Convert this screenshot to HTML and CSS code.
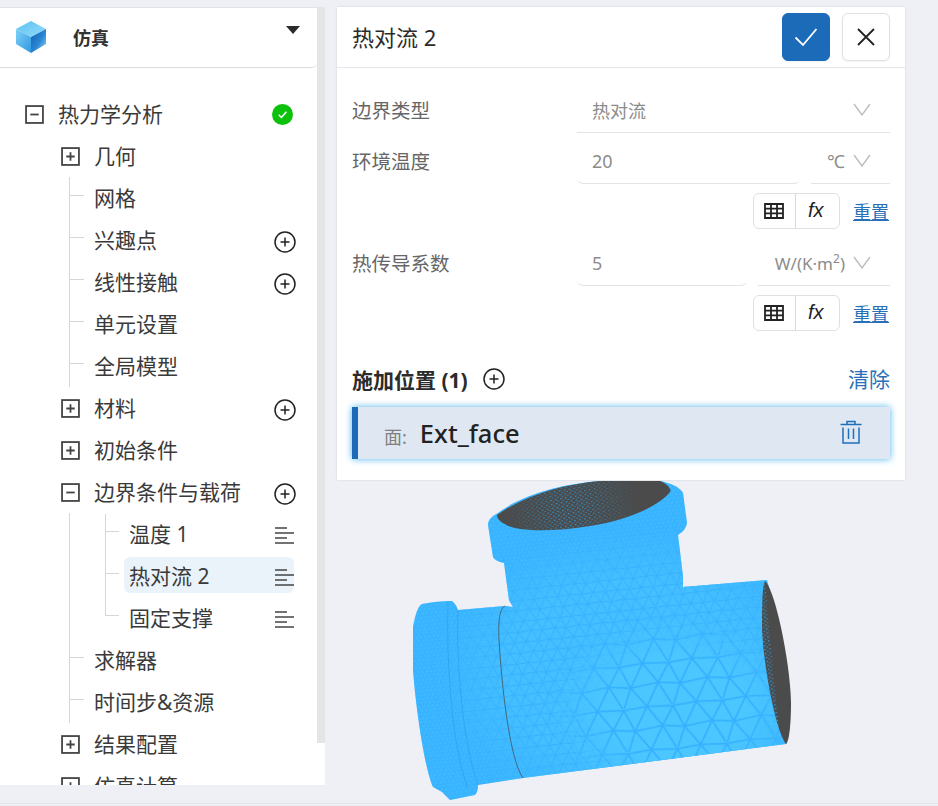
FILE: index.html
```html
<!DOCTYPE html>
<html lang="zh-CN">
<head>
<meta charset="utf-8">
<title>热对流 2</title>
<link rel="stylesheet" href="styles.css">
</head>
<body>
<div class="app">
  <svg class="model" viewBox="0 0 938 806" width="938" height="806" aria-hidden="true">
    <defs>
      <path id="tile" d="M0 0L42 3L80 0M-23 38L22 33L57 38L102 33M0 0L22 33L42 3L57 38L80 0L102 33M0 0L-23 38M-23 38L0 70L22 33L42 73L57 38L80 70L102 33M0 70L42 73L80 70"/>
      <pattern id="fine" width="80" height="70" patternUnits="userSpaceOnUse" patternTransform="rotate(-6) scale(.11)">
        <use href="#tile" fill="none" stroke="#4cc2ff" stroke-width="4"/>
      </pattern>
      <pattern id="medium" width="80" height="70" patternUnits="userSpaceOnUse" patternTransform="rotate(-6) scale(.3)">
        <rect width="80" height="70" fill="#45bfff"/>
        <use href="#tile" fill="none" stroke="#33b0ff" stroke-width="3.200"/>
      </pattern>
      <pattern id="coarse" width="80" height="70" patternUnits="userSpaceOnUse" patternTransform="rotate(-6) translate(520 640) scale(.62)">
        <rect width="80" height="70" fill="#4cc6ff"/>
        <use href="#tile" fill="none" stroke="#33b0ff" stroke-width="2.600"/>
      </pattern>
      <pattern id="dots" width="5" height="4" patternUnits="userSpaceOnUse" patternTransform="rotate(-10)">
        <rect x="0" y="0" width="1.500" height="1.200" fill="#2aa0e6"/>
        <rect x="2.500" y="2" width="1.200" height="1" fill="#2aa0e6"/>
      </pattern>
      <radialGradient id="fadeMedium" gradientUnits="userSpaceOnUse" cx="630" cy="670" r="200" gradientTransform="translate(0 170) scale(1 .75)">
        <stop offset=".6" stop-color="#fff"/>
        <stop offset="1" stop-color="#000"/>
      </radialGradient>
      <radialGradient id="fadeCoarse" gradientUnits="userSpaceOnUse" cx="675" cy="708" r="130" gradientTransform="translate(0 195) scale(1 .725)">
        <stop offset=".55" stop-color="#fff"/>
        <stop offset="1" stop-color="#000"/>
      </radialGradient>
      <radialGradient id="fadeDots" gradientUnits="userSpaceOnUse" cx="570" cy="510" r="70">
        <stop offset=".2" stop-color="#fff"/>
        <stop offset="1" stop-color="#000"/>
      </radialGradient>
      <mask id="maskMedium" maskUnits="userSpaceOnUse" x="325" y="470" width="613" height="336"><rect x="325" y="470" width="613" height="336" fill="url(#fadeMedium)"/></mask>
      <mask id="maskCoarse" maskUnits="userSpaceOnUse" x="325" y="470" width="613" height="336"><rect x="325" y="470" width="613" height="336" fill="url(#fadeCoarse)"/></mask>
      <mask id="maskDots" maskUnits="userSpaceOnUse" x="325" y="470" width="613" height="336"><rect x="325" y="470" width="613" height="336" fill="url(#fadeDots)"/></mask>
      <path id="body" d="M413 627C415 615 418 606 422 604C432 602 442 601 452 601Q456 604 458 610L505 606L513 607L509 600L504 563Q495 561 493 557L488 525Q488 518 498 513C520 496 560 484 600 481L660 481C670 483 680 487 683 493L687 523Q686 530 678 535L683 577L683 587L767 580C778 620 790 680 786 744L523 778L478 785Q478 792 475 795L450 800L442 792L433 787C425 770 416 710 413 670Z"/>
    </defs>
    <use href="#body" fill="#33b0ff"/>
    <use href="#body" fill="url(#fine)"/>
    <use href="#body" fill="url(#medium)" mask="url(#maskMedium)"/>
    <use href="#body" fill="url(#coarse)" mask="url(#maskCoarse)"/>
    <path d="M458 610C456 660 462 740 478 785M448 601C446 660 452 750 468 788" fill="none" stroke="#2fa8f2" stroke-width="1"/>
    <path d="M497 515C525 495 565 484 600 481L660 481C668 484 672 490 670 492C660 505 630 520 590 526C555 532 515 532 505 524C500 522 497 518 497 515Z" fill="#4b4b4b"/>
    <path d="M497 515C525 495 565 484 600 481L660 481C668 484 672 490 670 492C660 505 630 520 590 526C555 532 515 532 505 524C500 522 497 518 497 515Z" fill="url(#dots)" mask="url(#maskDots)"/>
    <path d="M765 581C775 590 790 660 791 703C791 725 789 742 786 744C778 735 765 680 762 630C762 605 762 588 765 581Z" fill="#4b4b4b"/>
    <path d="M765 581C762 588 762 605 762 630C765 680 772 712 779 730L770 640Z" fill="url(#dots)"/>
    <path d="M505 606C500 608 498 620 499 640C502 690 510 760 523 778" fill="none" stroke="#46535e" stroke-width=".8"/>
  </svg>

  <aside class="sidebar">
    <div class="brand">
      <svg class="brand-logo" viewBox="0 0 30 32" width="30" height="32" aria-hidden="true">
        <defs>
          <linearGradient id="cubeTop" x1="0" y1="0" x2="1" y2="1"><stop offset="0" stop-color="#5cc0f2"/><stop offset="1" stop-color="#93dcfa"/></linearGradient>
          <linearGradient id="cubeLeft" x1="0" y1="0" x2="1" y2="1"><stop offset="0" stop-color="#7ed2f7"/><stop offset="1" stop-color="#2f97e2"/></linearGradient>
          <linearGradient id="cubeRight" x1="0" y1="0" x2="1" y2="1"><stop offset="0" stop-color="#0f5fb4"/><stop offset=".55" stop-color="#2b86d4"/><stop offset="1" stop-color="#9fdcfa"/></linearGradient>
        </defs>
        <path d="M15 0L30 8L15 16L0 8Z" fill="url(#cubeTop)"/>
        <path d="M0 8L15 16V32L0 23Z" fill="url(#cubeLeft)"/>
        <path d="M30 8V23L15 32V16Z" fill="url(#cubeRight)"/>
      </svg>
      <span class="brand-name">仿真</span>
      <span class="caret"></span>
    </div>
    <div class="tree">
      <div class="row depth-0">
        <svg class="box" viewBox="0 0 18 18" aria-hidden="true"><rect x="1" y="1" width="16" height="16"/><path d="M5 9H13"/></svg>
        <span class="label">热力学分析</span>
        <svg class="end done" viewBox="0 0 21 21" aria-hidden="true"><circle cx="10.500" cy="10.500" r="10.500" fill="#0cc00c"/><path d="M6.700 10.800L9.400 13.500L14.400 7.800" fill="none" stroke="#fff" stroke-width="1.500"/></svg>
      </div>
      <div class="row depth-1">
        <svg class="box" viewBox="0 0 18 18" aria-hidden="true"><rect x="1" y="1" width="16" height="16"/><path d="M5 9H13M9 5V13"/></svg>
        <span class="label">几何</span>
      </div>
      <div class="guide">
        <div class="row leaf"><i class="tick"></i><span class="label">网格</span></div>
        <div class="row leaf"><i class="tick"></i><span class="label">兴趣点</span><svg class="end add" viewBox="0 0 22 22" aria-hidden="true"><circle cx="11" cy="11" r="10"/><path d="M6.500 11H15.500M11 6.500V15.500"/></svg></div>
        <div class="row leaf"><i class="tick"></i><span class="label">线性接触</span><svg class="end add" viewBox="0 0 22 22" aria-hidden="true"><circle cx="11" cy="11" r="10"/><path d="M6.500 11H15.500M11 6.500V15.500"/></svg></div>
        <div class="row leaf"><i class="tick"></i><span class="label">单元设置</span></div>
        <div class="row leaf"><i class="tick"></i><span class="label">全局模型</span></div>
      </div>
      <div class="row depth-1">
        <svg class="box" viewBox="0 0 18 18" aria-hidden="true"><rect x="1" y="1" width="16" height="16"/><path d="M5 9H13M9 5V13"/></svg>
        <span class="label">材料</span>
        <svg class="end add" viewBox="0 0 22 22" aria-hidden="true"><circle cx="11" cy="11" r="10"/><path d="M6.500 11H15.500M11 6.500V15.500"/></svg>
      </div>
      <div class="row depth-1">
        <svg class="box" viewBox="0 0 18 18" aria-hidden="true"><rect x="1" y="1" width="16" height="16"/><path d="M5 9H13M9 5V13"/></svg>
        <span class="label">初始条件</span>
      </div>
      <div class="row depth-1">
        <svg class="box" viewBox="0 0 18 18" aria-hidden="true"><rect x="1" y="1" width="16" height="16"/><path d="M5 9H13"/></svg>
        <span class="label">边界条件与载荷</span>
        <svg class="end add" viewBox="0 0 22 22" aria-hidden="true"><circle cx="11" cy="11" r="10"/><path d="M6.500 11H15.500M11 6.500V15.500"/></svg>
      </div>
      <div class="guide">
        <div class="subguide">
          <div class="row subleaf"><i class="tick"></i><span class="label">温度 1</span><svg class="end menu" viewBox="0 0 19 17" aria-hidden="true"><path d="M0 1H12M0 6H19M0 11H12M0 16H19"/></svg></div>
          <div class="row subleaf"><i class="tick"></i><span class="label selected">热对流 2</span><svg class="end menu" viewBox="0 0 19 17" aria-hidden="true"><path d="M0 1H12M0 6H19M0 11H12M0 16H19"/></svg></div>
          <div class="row subleaf"><i class="tick"></i><span class="label">固定支撑</span><svg class="end menu" viewBox="0 0 19 17" aria-hidden="true"><path d="M0 1H12M0 6H19M0 11H12M0 16H19"/></svg></div>
        </div>
        <div class="row leaf"><i class="tick"></i><span class="label">求解器</span></div>
        <div class="row leaf"><i class="tick"></i><span class="label">时间步&amp;资源</span></div>
      </div>
      <div class="row depth-1">
        <svg class="box" viewBox="0 0 18 18" aria-hidden="true"><rect x="1" y="1" width="16" height="16"/><path d="M5 9H13M9 5V13"/></svg>
        <span class="label">结果配置</span>
      </div>
      <div class="row depth-1">
        <svg class="box" viewBox="0 0 18 18" aria-hidden="true"><rect x="1" y="1" width="16" height="16"/><path d="M5 9H13M9 5V13"/></svg>
        <span class="label">仿真计算</span>
      </div>
    </div>
  </aside>
  <div class="scrollbar"><div class="thumb"></div></div>

  <section class="panel">
    <header class="panel-head">
      <h1 class="panel-title">热对流 2</h1>
      <button class="btn primary" type="button" aria-label="确定">
        <svg viewBox="0 0 24 20" width="24" height="20" aria-hidden="true"><path d="M1.500 10.500L9 18L22.500 2" fill="none" stroke="#fff" stroke-width="1.800"/></svg>
      </button>
      <button class="btn" type="button" aria-label="关闭">
        <svg viewBox="0 0 20 20" width="20" height="20" aria-hidden="true"><path d="M2 2L18 18M18 2L2 18" fill="none" stroke="#222" stroke-width="1.800"/></svg>
      </button>
    </header>
    <div class="form">
      <div class="field first">
        <span class="field-label">边界类型</span>
        <div class="control wide"><span class="value">热对流</span><svg class="chev" viewBox="0 0 18 13" aria-hidden="true"><path d="M1 1L9 12L17 1"/></svg></div>
      </div>
      <div class="field">
        <span class="field-label">环境温度</span>
        <div class="control temp"><span class="value">20</span></div>
        <div class="control unit temp-unit"><span class="value">℃</span><svg class="chev" viewBox="0 0 18 13" aria-hidden="true"><path d="M1 1L9 12L17 1"/></svg></div>
      </div>
      <div class="actions">
        <div class="tools">
          <span class="tool">
            <svg viewBox="0 0 20 16" width="20" height="16" aria-hidden="true"><path d="M1 1H19V15H1ZM1 5.700H19M1 10.300H19M7 1V15M13 1V15" fill="none" stroke="#222" stroke-width="1.800"/></svg>
          </span>
          <span class="tool fx">fx</span>
        </div>
        <a class="reset">重置</a>
      </div>
      <div class="field second">
        <span class="field-label">热传导系数</span>
        <div class="control coef"><span class="value">5</span></div>
        <div class="control unit coef-unit"><span class="value small">W/(K·m<sup>2</sup>)</span><svg class="chev" viewBox="0 0 18 13" aria-hidden="true"><path d="M1 1L9 12L17 1"/></svg></div>
      </div>
      <div class="actions">
        <div class="tools">
          <span class="tool">
            <svg viewBox="0 0 20 16" width="20" height="16" aria-hidden="true"><path d="M1 1H19V15H1ZM1 5.700H19M1 10.300H19M7 1V15M13 1V15" fill="none" stroke="#222" stroke-width="1.800"/></svg>
          </span>
          <span class="tool fx">fx</span>
        </div>
        <a class="reset">重置</a>
      </div>
      <div class="section-head">
        <strong class="section-title">施加位置 (1)</strong>
        <svg class="section-add" viewBox="0 0 22 22" aria-hidden="true"><circle cx="11" cy="11" r="10"/><path d="M6.500 11H15.500M11 6.500V15.500"/></svg>
        <a class="clear">清除</a>
      </div>
      <div class="picked">
        <span class="picked-kind">面:</span>
        <span class="picked-name">Ext_face</span>
        <svg class="trash" viewBox="0 0 22 24" width="22" height="24" aria-hidden="true"><path d="M7 4V1.500H15V4M0.500 4.500H21.500M3 7.500V23H19V7.500M8.500 8.500V19M13.500 8.500V19" fill="none" stroke="#1f6fbd" stroke-width="1.500"/></svg>
      </div>
    </div>
  </section>
</div>
</body>
</html>
```

FILE: styles.css
```css
* { box-sizing: border-box; }
html, body { margin: 0; padding: 0; }
body {
  width: 938px;
  height: 806px;
  overflow: hidden;
  background: #eff0f5;
  color: #333;
  font-family: "Noto Sans", "Noto Sans CJK SC", sans-serif;
}
.app {
  position: relative;
  display: flex;
  align-items: flex-start;
  width: 938px;
  height: 804px;
  padding-top: 7px;
  border-bottom: 1px solid #e3e3e3;
}
.model { position: absolute; left: 0; top: 0; }

.sidebar {
  position: relative;
  flex: none;
  width: 317px;
  height: 778px;
  overflow: hidden;
  background: #fff;
  border-top: 1px solid #e2e2e4;
}
.brand {
  display: flex;
  align-items: center;
  height: 60px;
  padding-left: 16px;
  border-bottom: 1px solid #dcdcdf;
  border-radius: 0 0 5px 0;
}
.brand-logo { flex: none; margin-top: -1px; }
.brand-name {
  margin: -2px 0 0 27px;
  font-size: 18px;
  font-weight: 700;
  color: #333;
}
.caret {
  margin: -16px 17px 0 auto;
  border-left: 7px solid transparent;
  border-right: 7px solid transparent;
  border-top: 8px solid #2b2b2b;
}
.tree { padding-top: 25px; }
.row {
  display: flex;
  align-items: center;
  height: 42px;
  padding-right: 21px;
  font-size: 21px;
  line-height: 1;
  color: #3a3a3a;
}
.depth-0 { padding-left: 25px; }
.depth-1 { padding-left: 61px; }
.box {
  flex: none;
  width: 19px;
  height: 19px;
  margin-right: 14px;
  fill: none;
  stroke: #444;
  stroke-width: 1.700;
}
.end { flex: none; margin-left: auto; }
.done { width: 21px; height: 21px; margin-right: 3px; }
.add {
  width: 22px;
  height: 22px;
  margin-top: 4px;
  fill: none;
  stroke: #222;
  stroke-width: 1.500;
}
.menu {
  width: 19px;
  height: 17px;
  margin-top: 3px;
  fill: none;
  stroke: #444;
  stroke-width: 1.600;
}
.guide {
  margin-left: 69px;
  border-left: 1px solid #d6d6d6;
}
.tick {
  flex: none;
  width: 14px;
  height: 1px;
  margin-top: -5px;
  background: #d6d6d6;
}
.leaf .label { margin-left: 10px; }
.subguide {
  position: relative;
  margin-left: 35px;
}
.subguide::before {
  content: "";
  position: absolute;
  left: 0;
  top: 1px;
  bottom: 24px;
  width: 1px;
  background: #d6d6d6;
}
.subleaf { padding-right: 23px; }
.subleaf .label { margin-left: 10px; }
.subleaf .selected {
  display: flex;
  align-items: center;
  flex: none;
  width: 170px;
  height: 36px;
  margin: -2px -148px 0 5px;
  padding: 2px 0 0 5px;
  border-radius: 6px;
  background: #ebf3fa;
}

.scrollbar {
  flex: none;
  width: 8px;
  height: 778px;
  background: #fff;
}
.thumb { height: 736px; background: #e5e5e5; }

.panel {
  position: relative;
  flex: none;
  width: 568px;
  height: 473px;
  margin-left: 12px;
  background: #fff;
  box-shadow: 0 0 2px rgba(0, 0, 0, .12);
}
.panel-head {
  display: flex;
  align-items: center;
  gap: 12px;
  height: 61px;
  padding: 0 15px;
  border-bottom: 1px solid #e4e6ea;
}
.panel-title {
  flex: 1;
  margin: -2px 0 0;
  font-size: 22px;
  font-weight: 400;
  color: #2b2b2b;
}
.btn {
  display: flex;
  align-items: center;
  justify-content: center;
  width: 48px;
  height: 48px;
  padding: 0;
  background: #fff;
  border: 1px solid #e0e0e0;
  border-radius: 6px;
  box-shadow: 0 1px 2px rgba(0, 0, 0, .05);
}
.primary { background: #1b6bb9; border-color: #1b6bb9; }
.form { padding: 22px 15px 0; }
.field {
  display: flex;
  align-items: stretch;
  height: 43px;
  margin-top: 8px;
}
.field.first { margin-top: 0; }
.field.second { margin-top: 14px; }
.field-label {
  flex: none;
  width: 225px;
  font-size: 19.500px;
  line-height: 42px;
  color: #666;
}
.control {
  display: flex;
  align-items: center;
  padding-left: 15px;
  border-bottom: 1px solid #e3e3e3;
  border-radius: 0 0 6px 6px;
  font-size: 18px;
  color: #8c8c8c;
}
.value { margin-top: -2px; }
.wide { flex: 1; padding-right: 19px; border-radius: 0; justify-content: space-between; }
.temp { width: 223px; }
.coef { width: 170px; }
.unit {
  margin-left: 11px;
  padding-left: 0;
  padding-right: 19px;
  justify-content: flex-end;
  gap: 8px;
  border-radius: 0;
}
.temp-unit { flex: 1; }
.coef-unit { flex: 1; }
.small { font-size: 17px; }
.value sup { font-size: 12px; line-height: 0; }
.chev {
  flex: none;
  width: 18px;
  height: 13px;
  fill: none;
  stroke: #bdbdbd;
  stroke-width: 1.400;
  margin-top: -3px;
}
.actions {
  display: flex;
  align-items: center;
  justify-content: flex-end;
  margin-top: 9px;
  height: 36px;
}
.tools {
  display: flex;
  width: 87px;
  height: 36px;
  border: 1px solid #e0e0e0;
  border-radius: 6px;
}
.tool {
  display: flex;
  flex: 1;
  align-items: center;
  justify-content: center;
  height: 34px;
}
.tool + .tool { border-left: 1px solid #d8d8d8; }
.fx {
  font-family: "Liberation Sans", sans-serif;
  font-size: 20px;
  font-style: italic;
  color: #222;
  padding: 0 3px 2px 0;
}
.reset {
  margin: 0 1px 0 13px;
  font-size: 18px;
  color: #2a70b9;
  text-decoration: underline;
}
.section-head {
  display: flex;
  align-items: center;
  height: 30px;
  margin-top: 33px;
}
.section-title { font-size: 21px; font-weight: 700; color: #2b2b2b; }
.section-add {
  width: 22px;
  height: 22px;
  margin-left: 15px;
  fill: none;
  stroke: #222;
  stroke-width: 1.500;
}
.clear { margin: -2px 0 0 auto; font-size: 21px; color: #2a70b9; }
.picked {
  display: flex;
  align-items: center;
  height: 52px;
  margin-top: 13px;
  padding: 0 28px 0 26px;
  background: #dfe8f2;
  border-left: 6px solid #1b6bb9;
  box-shadow: 0 0 7px #4fb4ec;
}
.picked-kind { margin-top: 6px; font-size: 18px; color: #808080; }
.picked-name {
  margin-left: 13px;
  font-size: 25.500px;
  font-weight: 500;
  color: #222;
}
.trash { margin-left: auto; margin-top: -2px; }
```
